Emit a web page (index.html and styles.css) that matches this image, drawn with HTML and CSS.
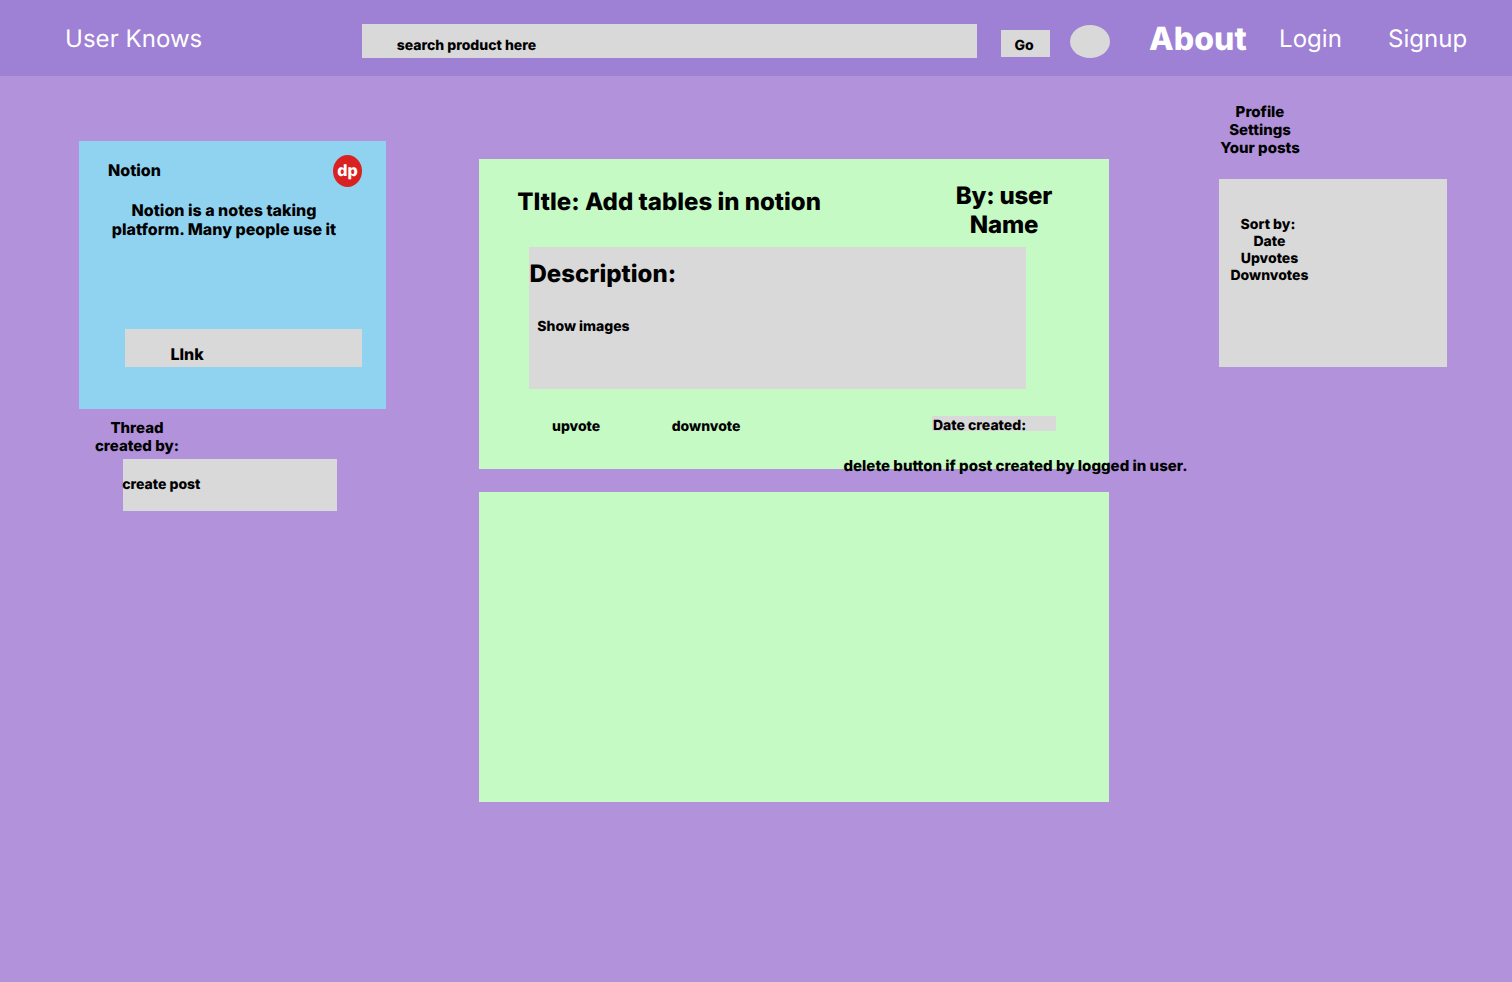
FILE: index.html
```html
<!DOCTYPE html>
<html lang="en">
<head>
<meta charset="utf-8">
<title>User Knows</title>
<link rel="stylesheet" href="styles.css">
</head>
<body>
<header class="topbar">
  <div class="brand">User Knows</div>
  <div class="search">search product here</div>
  <div class="go">Go</div>
  <div class="avatar"></div>
  <nav class="nav">
    <a class="about">About</a>
    <a class="login">Login</a>
    <a class="signup">Signup</a>
  </nav>
</header>
<main class="page">
  <aside class="left">
    <section class="product">
      <div class="product-head">
        <h2 class="product-name">Notion</h2>
        <div class="dp">dp</div>
      </div>
      <p class="product-text">Notion is a notes taking<br>platform. Many people use it</p>
      <div class="product-link">LInk</div>
    </section>
    <p class="thread">Thread<br>created by:</p>
    <div class="create"><span class="create-label">create post</span></div>
  </aside>
  <section class="feed">
    <article class="post">
      <div class="post-head">
        <h1 class="post-title">TItle: Add tables in notion</h1>
        <div class="post-author">By: user<br>Name</div>
      </div>
      <div class="post-body">
        <h2 class="desc-title">Description:</h2>
        <p class="desc-images">Show images</p>
      </div>
      <div class="post-foot">
        <span class="upvote">upvote</span>
        <span class="downvote">downvote</span>
        <span class="date">Date created:</span>
      </div>
      <p class="delete-note">delete button if post created by logged in user.</p>
    </article>
    <article class="post"></article>
  </section>
  <aside class="right">
    <div class="menu">Profile<br>Settings<br>Your posts</div>
    <div class="sort"><div class="sort-list"><span class="sort-title">Sort by:</span><br>Date<br>Upvotes<br>Downvotes</div></div>
  </aside>
</main>
</body>
</html>
```
FILE: styles.css
```css
* { box-sizing: border-box; }
body {
  margin: 0;
  min-height: 982px;
  background: #b292db;
  color: #000;
  font: 800 14px/17px Inter, sans-serif;
  text-rendering: geometricPrecision;
  white-space: nowrap;
}
h1, h2, p { margin: 0; font-size: inherit; font-weight: inherit; }

.topbar {
  display: flex;
  align-items: flex-start;
  height: 76px;
  padding-left: 65px;
  background: #9e80d5;
}
.brand {
  width: 297px;
  margin-top: 24px;
  color: #fff;
  font-size: 24px;
  font-weight: 400;
  line-height: 29px;
  letter-spacing: 0.04px;
}
.search {
  width: 615px;
  height: 34px;
  margin-top: 24px;
  padding: 13px 0 0 34.7px;
  background: #d9d9d9;
}
.go {
  width: 49px;
  height: 27px;
  margin: 30px 0 0 24px;
  padding: 7px 0 0 13.5px;
  background: #d9d9d9;
}
.avatar {
  width: 40px;
  height: 33px;
  margin: 25px 0 0 20px;
  border-radius: 50%;
  background: #d9d9d9;
}
.nav {
  display: flex;
  margin: 24px 0 0 39px;
  color: #fff;
  font-size: 24px;
  font-weight: 400;
  line-height: 29px;
  letter-spacing: 0.06px;
}
.about { width: 130px; margin-top: -5px; font-size: 32px; font-weight: 800; line-height: 39px; }
.login { width: 109px; }

.page { display: flex; align-items: flex-start; padding-left: 79px; }

.left { width: 307px; margin-top: 65px; }
.product {
  height: 268px;
  padding: 14px 24px 0 29px;
  background: #90d3f0;
  font-size: 16px;
  line-height: 19px;
}
.product-head { display: flex; justify-content: space-between; height: 46px; }
.product-name { margin-top: 6px; }
.dp {
  width: 29px;
  height: 32px;
  padding-top: 6px;
  border-radius: 50%;
  background: #d92121;
  color: #fff;
  text-align: center;
}
.product-text { width: 232px; text-align: center; }
.product-link {
  height: 38px;
  margin: 90px 0 0 17px;
  padding: 16px 0 0 45.4px;
  background: #d9d9d9;
}
.thread { width: 116px; margin-top: 10px; font-size: 15px; line-height: 18px; text-align: center; }
.create {
  width: 214px;
  height: 52px;
  margin: 4px 0 0 44px;
  padding-top: 17px;
  background: #d9d9d9;
}
.create-label { margin-left: -0.8px; }

.feed { display: flex; flex-direction: column; gap: 23px; width: 630px; margin: 83px 0 0 93px; }
.post { height: 310px; background: #c5fac4; }
.post-head {
  display: flex;
  height: 88px;
  padding-left: 38.3px;
  font-size: 24px;
  line-height: 29px;
}
.post-title { width: 426.7px; margin-top: 28px; font-size: 24px; }
.post-author { width: 120px; margin-top: 22px; letter-spacing: -0.2px; text-align: center; }
.post-body { width: 497px; height: 142px; margin-left: 50px; padding-top: 12px; background: #d9d9d9; }
.desc-title { padding-left: 0.5px; font-size: 24px; line-height: 29px; }
.desc-images { margin: 30px 0 0 8.3px; }
.post-foot { display: flex; align-items: flex-start; height: 67px; padding: 27px 0 0 73px; }
.upvote { width: 119.7px; margin-top: 2px; }
.downvote { width: 260.3px; margin-top: 2px; }
.date { width: 124px; height: 15px; padding: 1px 0 0 1px; background: #d9d9d9; }
.delete-note { margin: 1px 0 0 364.5px; font-size: 15px; line-height: 18px; letter-spacing: 0.015px; }

.right { width: 228px; margin: 27px 0 0 110px; }
.menu { width: 82px; font-size: 15px; line-height: 18px; text-align: center; }
.sort { height: 188px; margin-top: 22px; padding: 37px 0 0 11px; background: #d9d9d9; }
.sort-list { width: 79px; text-align: center; }
.sort-title { padding-right: 3px; }
```
